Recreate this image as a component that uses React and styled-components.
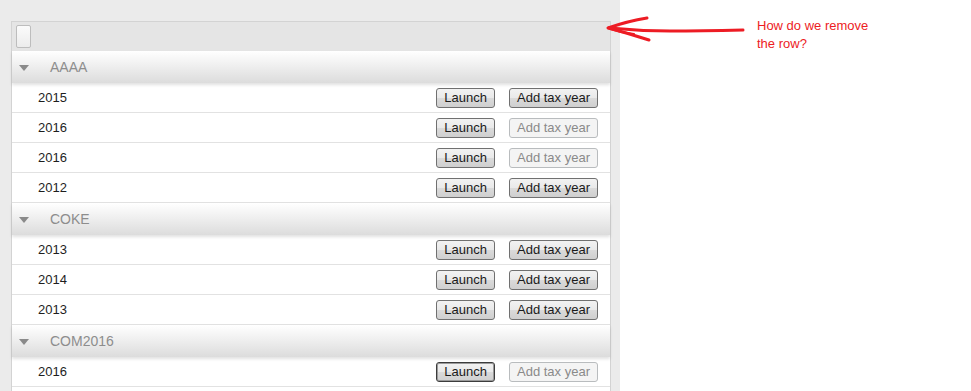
import React from "react";
import styled, { createGlobalStyle } from "styled-components";

const GlobalStyle = createGlobalStyle`
  html, body { margin: 0; padding: 0; background: #ffffff; overflow: hidden; }
  body { font-family: "Liberation Sans", Arial, sans-serif; }
`;

const Page = styled.div`
  position: relative;
  display: flex;
  height: 391px;
  overflow: hidden;
`;

const LeftPane = styled.div`
  width: 620px;
  flex: none;
  box-sizing: border-box;
  background: #ebebeb;
  padding: 21px 9px 0 11px;
  display: flex;
  flex-direction: column;
`;

const Grid = styled.div`
  flex: 1;
  border: 1px solid #d3d3d3;
  border-bottom: none;
  background: #ffffff;
`;

const Toolbar = styled.div`
  height: 29px;
  background: #e5e5e5;
  display: flex;
  align-items: center;
  padding-left: 4px;
`;

const ToolButton = styled.div`
  width: 13px;
  height: 21px;
  border: 1px solid #bdbdbd;
  border-radius: 2px;
  background: linear-gradient(#fbfbfb, #ececec);
`;

const GroupHeader = styled.div`
  position: relative;
  z-index: 1;
  height: 32px;
  display: flex;
  align-items: center;
  padding-left: 7px;
  background: linear-gradient(#ffffff 0%, #f3f3f3 35%, #dcdcdc 100%);
  box-shadow: 0 2px 3px rgba(0, 0, 0, 0.12);
  color: #8d8d8d;
  font-size: 14px;
`;

const Caret = styled.span`
  width: 0;
  height: 0;
  border-left: 5px solid transparent;
  border-right: 5px solid transparent;
  border-top: 6px solid #8a8a8a;
  margin-right: 21px;
  margin-top: 1px;
`;

const Row = styled.div`
  height: 29px;
  border-bottom: 1px solid #e2e2e2;
  display: flex;
  align-items: center;
  gap: 14px;
  padding: 0 12px 0 26px;
  font-size: 13px;
  color: #1e1e1e;
`;

const Year = styled.span`
  flex: 1;
`;

const Button = styled.button`
  height: 20px;
  box-sizing: border-box;
  padding: 0 7px;
  font-family: "Liberation Sans", Arial, sans-serif;
  font-size: 13px;
  line-height: 18px;
  border-radius: 3px;
  border: 1px solid ${(p) => (p.disabled ? "#b9bcbe" : p.focused ? "#3c3c3c" : "#707070")};
  color: ${(p) => (p.disabled ? "#8a8a8a" : "#1a1a1a")};
  background: ${(p) =>
    p.disabled
      ? "#f4f4f4"
      : "linear-gradient(#f2f2f2 0%, #e9e9e9 50%, #dadada 51%, #cfcfcf 100%)"};
  box-shadow: ${(p) => (p.focused ? "inset 0 0 0 1px #9a9a9a" : "none")};
`;

const Annotation = styled.div`
  padding: 17px 0 0 137px;
  color: #ed1c24;
  font-family: "Liberation Sans", Arial, sans-serif;
  font-size: 13px;
  line-height: 18px;
`;

const Arrow = styled.svg`
  position: absolute;
  left: 600px;
  top: 10px;
  pointer-events: none;
`;

const groups = [
  {
    name: "AAAA",
    rows: [
      { year: "2015", add: true },
      { year: "2016", add: false },
      { year: "2016", add: false },
      { year: "2012", add: true },
    ],
  },
  {
    name: "COKE",
    rows: [
      { year: "2013", add: true },
      { year: "2014", add: true },
      { year: "2013", add: true },
    ],
  },
  {
    name: "COM2016",
    rows: [{ year: "2016", add: false, focused: true }],
  },
];

export default function App() {
  return (
    <>
      <GlobalStyle />
      <Page>
        <LeftPane>
          <Grid>
            <Toolbar>
              <ToolButton />
            </Toolbar>
            {groups.map((g) => (
              <React.Fragment key={g.name}>
                <GroupHeader>
                  <Caret />
                  {g.name}
                </GroupHeader>
                {g.rows.map((r, i) => (
                  <Row key={i}>
                    <Year>{r.year}</Year>
                    <Button focused={r.focused}>Launch</Button>
                    <Button disabled={!r.add}>Add tax year</Button>
                  </Row>
                ))}
              </React.Fragment>
            ))}
          </Grid>
        </LeftPane>
        <Annotation>
          How do we remove
          <br />
          the row?
        </Annotation>
        <Arrow width="160" height="40" viewBox="0 0 160 40">
          <g fill="none" stroke="#ed1c24" strokeLinecap="round" strokeLinejoin="round">
            <path d="M8 18 Q 28 11 47 8" strokeWidth="3" />
            <path d="M9 18 Q 30 24 49 30" strokeWidth="3" />
            <path d="M10 19 Q 22 23 34 24" strokeWidth="2" />
            <path d="M9 18 Q 40 21 70 21 T 143 20" strokeWidth="3" />
          </g>
        </Arrow>
      </Page>
    </>
  );
}
